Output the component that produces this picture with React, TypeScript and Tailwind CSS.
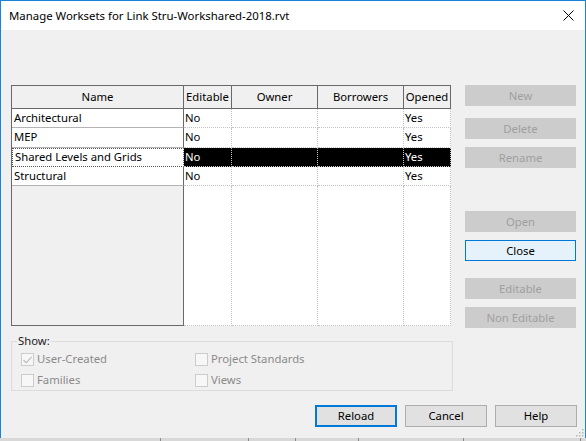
import React from 'react';

const cols = [
  { key: 'name', label: 'Name', w: 'w-[172px]' },
  { key: 'editable', label: 'Editable', w: 'w-[48px]' },
  { key: 'owner', label: 'Owner', w: 'w-[86px]' },
  { key: 'borrowers', label: 'Borrowers', w: 'w-[86px]' },
  { key: 'opened', label: 'Opened', w: 'w-[47px]' },
];

const rows = [
  { name: 'Architectural', editable: 'No', opened: 'Yes', h: 'h-[19px]', selected: false },
  { name: 'MEP', editable: 'No', opened: 'Yes', h: 'h-[20px]', selected: false },
  { name: 'Shared Levels and Grids', editable: 'No', opened: 'Yes', h: 'h-[19px]', selected: true },
  { name: 'Structural', editable: 'No', opened: 'Yes', h: 'h-[19px]', selected: false },
];

const SideButton: React.FC<{ label: string; active?: boolean; className?: string }> = ({ label, active, className }) => (
  <button
    className={
      'w-[111px] h-[21px] text-[11.3px] leading-none border ' +
      (active
        ? 'bg-[#e5f1fb] border-[#0078d7] text-black '
        : 'bg-[#cccccc] border-[#cccccc] text-[#a0a0a0] ') +
      (className ?? '')
    }
  >
    {label}
  </button>
);

const Check: React.FC<{ label: string; checked?: boolean }> = ({ label, checked }) => (
  <div className="flex items-center gap-[3px] h-[13px]">
    <div className="w-[13px] h-[13px] border border-[#cccccc] bg-[#f7f7f7] flex items-center justify-center">
      {checked && (
        <svg width="9" height="8" viewBox="0 0 9 8">
          <path d="M0.5 4 L3.2 6.8 L8.5 0.8" fill="none" stroke="#bdbdbd" strokeWidth="1.2" />
        </svg>
      )}
    </div>
    <span className="text-[11.3px] text-[#8a8a8a]">{label}</span>
  </div>
);

const BottomButton: React.FC<{ label: string; primary?: boolean }> = ({ label, primary }) => (
  <button
    className={
      'w-[82px] h-[22px] bg-[#e1e1e1] text-[11.3px] text-black leading-none ' +
      (primary ? 'border-2 border-[#0078d7]' : 'border border-[#adadad]')
    }
  >
    {label}
  </button>
);

export default function App() {
  return (
    <div className="w-[586px] h-[441px] bg-[#cfcfcf] font-['Noto_Sans','DejaVu_Sans',sans-serif] text-black overflow-hidden">
      <div className="relative w-[586px] h-[438px] flex flex-col border-l border-t border-r border-[#1883d7] bg-[#f0f0f0]">
        {/* Title bar */}
        <div className="h-[29px] bg-white flex items-center justify-between pl-[8px] pr-[9px]">
          <span className="text-[11.4px]">Manage Worksets for Link Stru-Workshared-2018.rvt</span>
          <svg width="11" height="11" viewBox="0 0 11 11" className="mr-[2px]">
            <path d="M0.5 0.5 L10.5 10.5 M10.5 0.5 L0.5 10.5" stroke="#000" strokeWidth="1" />
          </svg>
        </div>

        {/* Body */}
        <div className="flex-1 flex flex-col pl-[10px] pr-[8px] pt-[55px]">
          <div className="flex gap-[12px]">
            <div className="w-[442px] flex flex-col">
              {/* Grid */}
              <div className="w-[440px] h-[241px] flex flex-col border-l border-t border-[#696969] bg-white text-[11.3px]">
                <div className="flex h-[23px] bg-[#f0f0f0]">
                  {cols.map((c) => (
                    <div
                      key={c.key}
                      className={c.w + ' border-r border-b border-[#696969] flex items-center justify-center'}
                    >
                      {c.label}
                    </div>
                  ))}
                </div>
                {rows.map((r) => (
                  <div key={r.name} className={'flex ' + r.h}>
                    <div
                      className={
                        'w-[172px] bg-white flex items-center pl-[2px] border-r border-r-[#696969] ' +
                        (r.selected
                          ? 'border-l border-t border-b border-dotted border-l-[#555] border-t-[#555] border-b-[#555]'
                          : 'border-b border-b-[#b4b4b4]')
                      }
                    >
                      {r.name}
                    </div>
                    {cols.slice(1).map((c) => {
                      const v = c.key === 'editable' ? r.editable : c.key === 'opened' ? r.opened : '';
                      return (
                        <div
                          key={c.key}
                          className={
                            c.w +
                            ' flex items-center pl-[1px] border-r border-b border-dotted border-[#c4c4c4] ' +
                            (r.selected ? 'bg-black text-white' : 'bg-white')
                          }
                        >
                          {v}
                        </div>
                      );
                    })}
                  </div>
                ))}
                <div className="flex flex-1">
                  <div className="w-[172px] bg-[#f0f0f0] border-r border-b border-[#696969]" />
                  {cols.slice(1).map((c) => (
                    <div key={c.key} className={c.w + ' border-r border-b border-dotted border-[#c4c4c4]'} />
                  ))}
                </div>
              </div>

              {/* Show group */}
              <div className="relative mt-[15px] h-[50px] border border-[#dcdcdc]">
                <span className="absolute left-[5px] -top-[9px] px-[1px] bg-[#f0f0f0] text-[11.3px] text-[#222]">Show:</span>
                <div className="grid grid-cols-[174px_1fr] gap-y-[8px] pt-[11px] pl-[9px]">
                  <Check label="User-Created" checked />
                  <Check label="Project Standards" />
                  <Check label="Families" />
                  <Check label="Views" />
                </div>
              </div>
            </div>

            {/* Side buttons */}
            <div className="flex flex-col">
              <SideButton label="New" />
              <SideButton label="Delete" className="mt-[12px]" />
              <SideButton label="Rename" className="mt-[8px]" />
              <SideButton label="Open" className="mt-[43px]" />
              <SideButton label="Close" active className="mt-[8px]" />
              <SideButton label="Editable" className="mt-[17px]" />
              <SideButton label="Non Editable" className="mt-[8px]" />
            </div>
          </div>

          {/* Bottom buttons */}
          <div className="flex justify-end gap-[8px] mt-[14px]">
            <BottomButton label="Reload" primary />
            <BottomButton label="Cancel" />
            <BottomButton label="Help" />
          </div>
        </div>

        {/* Resize grip */}
        <svg width="9" height="9" viewBox="0 0 9 9" className="absolute right-[1px] bottom-[1px]">
          {[
            [7, 1], [7, 4], [4, 4], [7, 7], [4, 7], [1, 7],
          ].map(([x, y], i) => (
            <rect key={i} x={x} y={y} width="1.5" height="1.5" fill="#b8b8b8" />
          ))}
        </svg>
      </div>
      <svg width="586" height="3" className="block">
        <rect width="586" height="3" fill="#d8d8d8" />
        {[160, 248, 295, 358, 463, 580].map((x) => (
          <rect key={x} x={x} y="0" width="1" height="3" fill="#8a8a8a" />
        ))}
      </svg>
    </div>
  );
}
